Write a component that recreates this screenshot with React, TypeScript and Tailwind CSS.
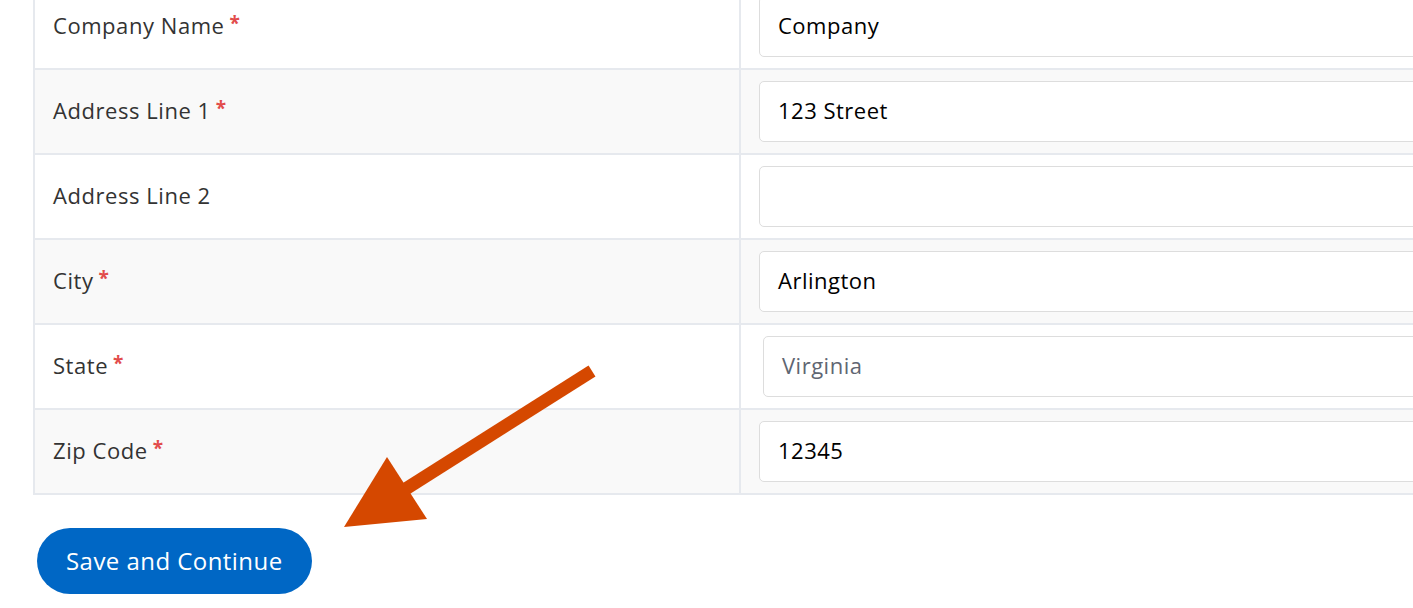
import React from 'react';

type Field = {
  label: string;
  value: string;
  required: boolean;
  muted?: boolean;
};

const FIELDS: Field[] = [
  { label: 'Company Name', value: 'Company', required: true },
  { label: 'Address Line 1', value: '123 Street', required: true },
  { label: 'Address Line 2', value: '', required: false },
  { label: 'City', value: 'Arlington', required: true },
  { label: 'State', value: 'Virginia', required: true, muted: true },
  { label: 'Zip Code', value: '12345', required: true },
];

const Arrow: React.FC = () => (
  <svg
    className="pointer-events-none absolute left-0 top-0"
    width="1413"
    height="608"
    viewBox="0 0 1413 608"
  >
    {/* shaft */}
    <line x1="592" y1="371" x2="404" y2="490" stroke="#d54800" strokeWidth="13" />
    {/* head */}
    <polygon points="344,527 387,457 427,519" fill="#d54800" />
  </svg>
);

const App: React.FC = () => {
  return (
    <div className="relative h-[608px] w-[1413px] overflow-hidden bg-white font-['Open_Sans',sans-serif]">
      <div className="-mt-[15px] ml-[33px] border-l-2 border-[#e6e9ee]">
        {FIELDS.map((field, i) => (
          <div
            key={field.label}
            className={`flex h-[85px] border-b-2 border-[#e6e9ee] ${i % 2 === 1 ? 'bg-[#f9f9f9]' : 'bg-white'}`}
          >
            <div className="flex w-[706px] shrink-0 items-center border-r-2 border-[#e6e9ee] pb-[2px] pl-[18px] text-[22px] tracking-[0.55px] text-[#333]">
              {field.label}
              {field.required && (
                <span className="-mt-[4px] ml-[5px] text-[19px] font-bold text-[#e24c4b]">*</span>
              )}
            </div>
            <div className="flex items-center pl-[18px]">
              <div
                className={`flex h-[61px] w-[720px] shrink-0 items-center rounded-[5px] border border-[#dddddd] bg-white pb-[2px] pl-[18px] text-[22px] tracking-[0.5px] ${field.muted ? 'ml-1 text-[#5f6672]' : 'text-black'}`}
              >
                {field.value}
              </div>
            </div>
          </div>
        ))}
      </div>

      <div className="ml-[37px] mt-[33px]">
        <button className="h-[66px] rounded-full bg-[#0067c5] px-[29px] text-[24px] tracking-[0.45px] text-white">
          Save and Continue
        </button>
      </div>

      <Arrow />
    </div>
  );
};

export default App;
